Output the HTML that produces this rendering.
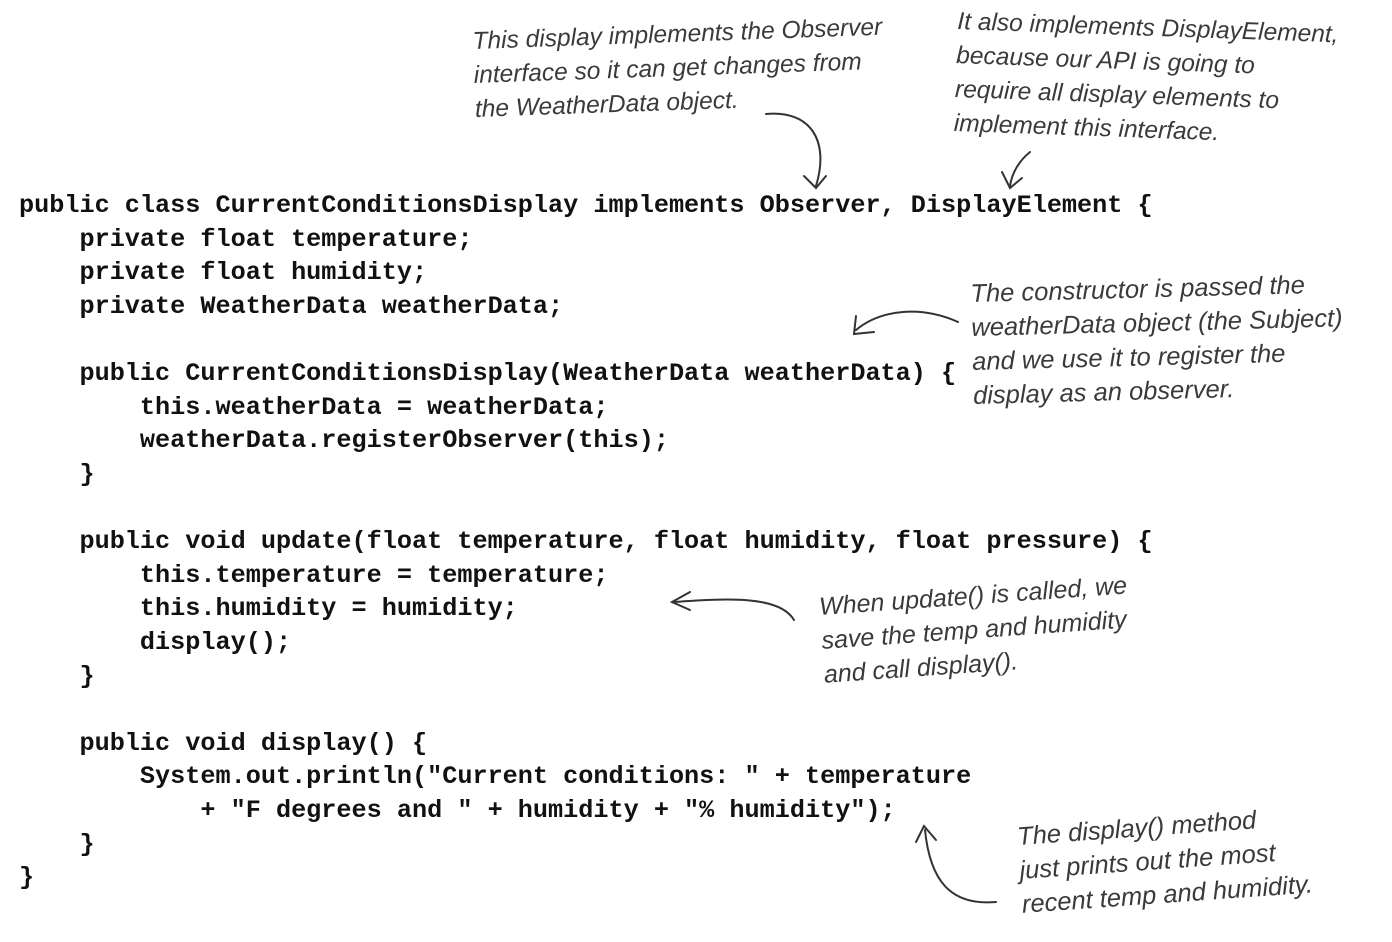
<!DOCTYPE html>
<html><head><meta charset="utf-8"><style>
body{margin:0;width:1392px;height:942px;background:#fff;position:relative;overflow:hidden}
.c{position:absolute;font-family:"Liberation Mono",monospace;font-weight:bold;font-size:25.2px;color:#111;white-space:pre;line-height:1}
.h{position:absolute;font-family:"Liberation Sans",sans-serif;font-style:italic;font-size:24.5px;color:#3a3a3a;white-space:pre;line-height:34px;transform-origin:0 0}
</style></head><body>
<div class="c" style="left:19px;top:193px">public class CurrentConditionsDisplay implements Observer, DisplayElement {</div>
<div class="c" style="left:19px;top:227px">    private float temperature;</div>
<div class="c" style="left:19px;top:260px">    private float humidity;</div>
<div class="c" style="left:19px;top:294px">    private WeatherData weatherData;</div>
<div class="c" style="left:19px;top:361px">    public CurrentConditionsDisplay(WeatherData weatherData) {</div>
<div class="c" style="left:19px;top:395px">        this.weatherData = weatherData;</div>
<div class="c" style="left:19px;top:428px">        weatherData.registerObserver(this);</div>
<div class="c" style="left:19px;top:462px">    }</div>
<div class="c" style="left:19px;top:529px">    public void update(float temperature, float humidity, float pressure) {</div>
<div class="c" style="left:19px;top:563px">        this.temperature = temperature;</div>
<div class="c" style="left:19px;top:596px">        this.humidity = humidity;</div>
<div class="c" style="left:19px;top:630px">        display();</div>
<div class="c" style="left:19px;top:664px">    }</div>
<div class="c" style="left:19px;top:731px">    public void display() {</div>
<div class="c" style="left:19px;top:764px">        System.out.println("Current conditions: " + temperature</div>
<div class="c" style="left:19px;top:798px">            + "F degrees and " + humidity + "% humidity");</div>
<div class="c" style="left:19px;top:832px">    }</div>
<div class="c" style="left:19px;top:865px">}</div>

<div class="h" style="left:472px;top:25px;transform:rotate(-2deg)">This display implements the Observer
interface so it can get changes from
the WeatherData object.</div>
<div class="h" style="left:958px;top:5px;transform:rotate(2deg)">It also implements DisplayElement,
because our API is going to
require all display elements to
implement this interface.</div>
<div class="h" style="left:970px;top:277px;transform:rotate(-1.5deg);font-size:25.5px">The constructor is passed the
weatherData object (the Subject)
and we use it to register the
display as an observer.</div>
<div class="h" style="left:818px;top:590px;transform:rotate(-4deg);font-size:25px">When update() is called, we
save the temp and humidity
and call display().</div>
<div class="h" style="left:1016px;top:820px;transform:rotate(-4deg);font-size:25.5px">The display() method
just prints out the most
recent temp and humidity.</div>

<svg width="1392" height="942" style="position:absolute;left:0;top:0" fill="none" stroke="#333" stroke-width="2" stroke-linecap="round">
<path d="M766 114 C810 110 830 140 816 186"/><path d="M804 176 L816 188 L826 176"/>
<path d="M1030 152 C1020 160 1012 172 1010 186"/><path d="M1002 172 L1010 188 L1022 178"/>
<path d="M958 322 C920 305 880 310 856 330"/><path d="M856 316 L854 334 L874 332"/>
<path d="M794 620 C780 596 730 598 674 602"/><path d="M690 592 L672 602 L690 610"/>
<path d="M996 902 C950 906 930 880 925 830"/><path d="M916 842 L924 826 L936 840"/>
</svg>
</body></html>
